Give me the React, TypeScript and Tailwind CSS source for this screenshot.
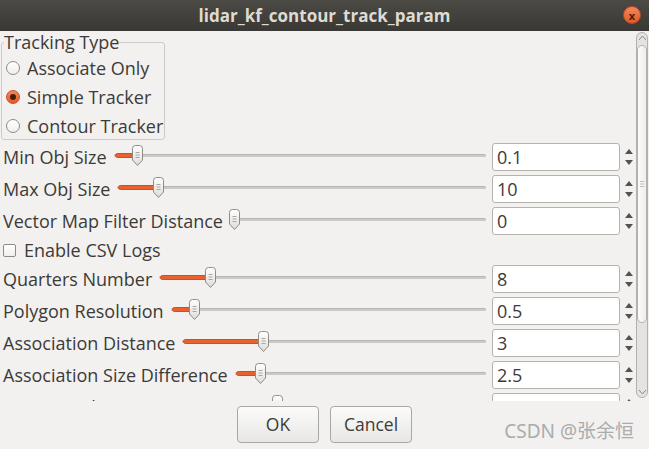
import React from 'react';

type Row = { label: string; value: string; pos: number };

const topRows: Row[] = [
    { label: 'Min Obj Size', value: '0.1', pos: 19 },
    { label: 'Max Obj Size', value: '10', pos: 37 },
    { label: 'Vector Map Filter Distance', value: '0', pos: 0 },
];

const bottomRows: Row[] = [
    { label: 'Quarters Number', value: '8', pos: 47 },
    { label: 'Polygon Resolution', value: '0.5', pos: 19 },
    { label: 'Association Distance', value: '3', pos: 77 },
    { label: 'Association Size Difference', value: '2.5', pos: 21 },
    { label: 'Max Remeber Time', value: '3', pos: 100 },
];

function Handle() {
    return (
        <svg width="13" height="22" viewBox="0 0 13 22" className="block">
            <defs>
                <linearGradient id="hg" x1="0" y1="0" x2="0" y2="1">
                    <stop offset="0" stopColor="#ffffff" />
                    <stop offset="1" stopColor="#dedcd8" />
                </linearGradient>
            </defs>
            <path
                d="M1.5 3.5Q1.5 0.5 4.5 0.5H8.5Q11.5 0.5 11.5 3.5V15L6.5 20.5L1.5 15Z"
                fill="url(#hg)"
                stroke="#8e8c88"
            />
            <path d="M4.5 7.5H8.5M4.5 10H8.5M4.5 12.5H8.5" stroke="#a9a7a3" strokeWidth="1" />
        </svg>
    );
}

function Slider({ pos }: { pos: number }) {
    return (
        <div className="relative ml-[5px] mr-[6px] h-full flex-1">
            {/* gray groove */}
            <div className="absolute left-[2px] right-0 top-[11px] h-[3px] rounded-full bg-[#cbc9c5] border-t border-[#b9b7b3]" />
            {/* orange fill up to the handle */}
            {pos > 2 ? (
                <div
                    className="absolute left-[3px] top-[10px] h-[5px] rounded-full bg-[#e9622d] border border-[#c9521f]"
                    style={{ width: pos + 3 }}
                />
            ) : null}
            <div className="absolute top-[2px]" style={{ left: pos }}>
                <Handle />
            </div>
        </div>
    );
}

function SpinBox({ value }: { value: string }) {
    return (
        <div className="flex h-[28px] items-center">
            <div className="flex h-[28px] w-[128px] items-center rounded-[3px] border border-[#b6b3ae] bg-white pl-[4px] pt-[1px] text-[18px] text-[#3c3b37]">
                {value}
            </div>
            <div className="flex h-full w-[16px] flex-col items-center justify-between py-[6px] pl-[1px]">
                <svg width="8" height="5" viewBox="0 0 8 5"><path d="M4 0L8 5H0Z" fill="#55534f" /></svg>
                <svg width="8" height="5" viewBox="0 0 8 5"><path d="M0 0H8L4 5Z" fill="#55534f" /></svg>
            </div>
        </div>
    );
}

function ParamRow({ row }: { row: Row }) {
    return (
        <div className="flex h-[28px] shrink-0 items-center">
            <span className="whitespace-nowrap pl-[3px] text-[18px] leading-[22px]">{row.label}</span>
            <Slider pos={row.pos} />
            <SpinBox value={row.value} />
        </div>
    );
}

function Radio({ label, checked }: { label: string; checked?: boolean }) {
    return (
        <div className="flex h-[29px] items-center">
            {checked ? (
                <span className="ml-[4px] flex h-[14px] w-[14px] items-center justify-center rounded-full border border-[#c9521f] bg-gradient-to-b from-[#f08a5d] to-[#e25a24]">
                    <span className="h-[6px] w-[6px] rounded-full bg-[#4a1c0c]" />
                </span>
            ) : (
                <span className="ml-[4px] h-[14px] w-[14px] rounded-full border border-[#8d8b87] bg-gradient-to-b from-white to-[#f0efed]" />
            )}
            <span className="ml-[7px] text-[18px] leading-[22px]">{label}</span>
        </div>
    );
}

function Scrollbar() {
    return (
        <div className="mr-[1px] mt-[1px] mb-[3px] flex w-[12px] flex-col rounded-full border border-[#b3b1ad] bg-[#e4e3e1]">
            <div className="flex h-[12px] shrink-0 items-start justify-center pt-[3px]">
                <svg width="7" height="4" viewBox="0 0 7 4"><path d="M0 4L3.5 0L7 4" fill="none" stroke="#8a8884" /></svg>
            </div>
            <div className="flex h-[278px] shrink-0 items-center justify-center rounded-full border border-[#b3b1ad] bg-gradient-to-r from-[#fbfbfa] to-[#efeeec]">
                <svg width="4" height="6" viewBox="0 0 4 6"><path d="M0 .5H4M0 3H4M0 5.5H4" stroke="#c0beba" /></svg>
            </div>
            <div className="flex-1" />
            <div className="flex h-[12px] shrink-0 items-end justify-center pb-[3px]">
                <svg width="7" height="4" viewBox="0 0 7 4"><path d="M0 0L3.5 4L7 0" fill="none" stroke="#8a8884" /></svg>
            </div>
        </div>
    );
}

export default function App() {
    return (
        <div className="relative flex h-[449px] w-[649px] flex-col overflow-hidden bg-[#f2f1f0] font-['Open_Sans','DejaVu_Sans',sans-serif] text-[#3c3b37]">
            {/* title bar */}
            <div className="relative flex h-[31px] shrink-0 items-center justify-center bg-gradient-to-b from-[#4b4a45] to-[#393834]">
                <span className="text-[17px] font-bold leading-none text-[#dfdbd2]">lidar_kf_contour_track_param</span>
                <span className="absolute right-[8px] top-[6px] flex h-[18px] w-[18px] items-center justify-center rounded-full border border-[#b94a22] bg-gradient-to-b from-[#f4865a] to-[#df5a25] text-[11px] font-bold leading-none text-[#4a2010]">
                    x
                </span>
            </div>

            {/* scroll area */}
            <div className="flex h-[370px] shrink-0">
                <div className="flex flex-1 flex-col overflow-hidden">
                    <fieldset className="ml-[1px] h-[109px] w-[164px] shrink-0 rounded-[3px] border border-[#cfccc8] px-0">
                        <legend className="ml-[2px] px-0 text-[18px] leading-[22px]">Tracking Type</legend>
                        <Radio label="Associate Only" />
                        <Radio label="Simple Tracker" checked />
                        <Radio label="Contour Tracker" />
                    </fieldset>

                    <div className="mt-[3px] flex flex-col gap-[4px]">
                        {topRows.map(r => (
                            <ParamRow key={r.label} row={r} />
                        ))}

                        <div className="flex h-[22px] shrink-0 items-center">
                            <span className="ml-[3px] h-[13px] w-[13px] rounded-[2px] border border-[#8d8b87] bg-gradient-to-b from-white to-[#f0efed]" />
                            <span className="ml-[8px] text-[18px] leading-[22px]">Enable CSV Logs</span>
                        </div>

                        {bottomRows.map(r => (
                            <ParamRow key={r.label} row={r} />
                        ))}
                    </div>
                </div>
                <Scrollbar />
            </div>

            {/* buttons */}
            <div className="flex flex-1 items-start justify-center gap-[11px] pt-[5px]">
                <button className="h-[37px] w-[82px] rounded-[4px] border border-[#a9a7a3] bg-gradient-to-b from-[#fbfbfa] to-[#e8e7e5] text-[17.5px] text-[#3c3b37]">
                    OK
                </button>
                <button className="h-[37px] w-[82px] rounded-[4px] border border-[#a9a7a3] bg-gradient-to-b from-[#fbfbfa] to-[#e8e7e5] text-[17.5px] text-[#3c3b37]">
                    Cancel
                </button>
            </div>

            {/* watermark */}
            <span className="absolute right-[15px] top-[418px] font-['Noto_Sans','Noto_Sans_CJK_SC',sans-serif] text-[19px] leading-[26px] text-[#ababab]">
                CSDN @张余恒
            </span>
        </div>
    );
}
